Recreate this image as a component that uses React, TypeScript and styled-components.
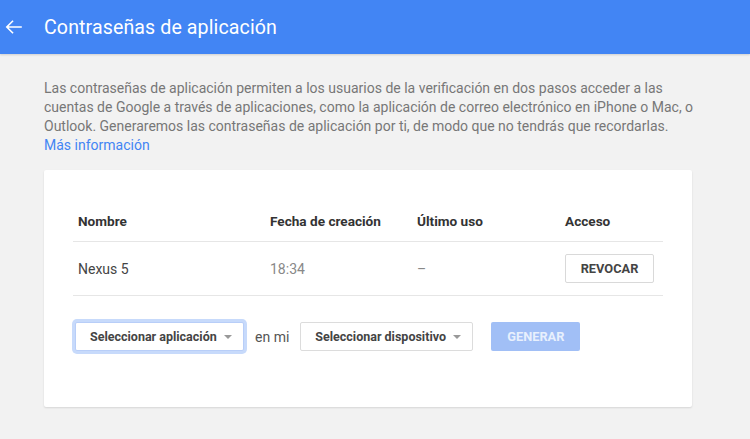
import React from "react";
import styled, { createGlobalStyle } from "styled-components";

const Global = createGlobalStyle`
  html, body { margin: 0; padding: 0; background: #f2f2f2; }
  body { font-family: Roboto, "Noto Sans", Arial, sans-serif; -webkit-font-smoothing: antialiased; }
  * { box-sizing: border-box; }
`;

const Page = styled.div`
  width: 750px;
  height: 439px;
  background: #f2f2f2;
  overflow: hidden;
`;

const Header = styled.header`
  height: 54px;
  background: #4285f4;
  display: flex;
  align-items: center;
  box-shadow: 0 1px 2px rgba(0, 0, 0, 0.15);
`;

const BackButton = styled.div`
  width: 44px;
  height: 54px;
  display: flex;
  align-items: center;
  padding-left: 5px;
`;

const Title = styled.h1`
  margin: 0;
  font-size: 19.6px;
  font-weight: 400;
  color: #fff;
  letter-spacing: 0.1px;
`;

const Content = styled.main`
  padding: 25px 30px 0 44px;
`;

const Intro = styled.p`
  margin: 0;
  width: 662px;
  font-size: 14px;
  line-height: 19px;
  color: #777;
`;

const Link = styled.a`
  color: #4285f4;
  text-decoration: none;
`;

const Card = styled.section`
  margin-top: 15px;
  width: 648px;
  background: #fff;
  border-radius: 2px;
  box-shadow: 0 1px 2px rgba(0, 0, 0, 0.12);
  padding: 30px 29px 56px 29px;
`;

const Table = styled.div`
  width: 590px;
`;

const Row = styled.div<{ $head?: boolean }>`
  display: grid;
  grid-template-columns: 192px 147px 148px 103px;
  align-items: center;
  height: ${(p) => (p.$head ? "42px" : "54px")};
  border-bottom: 1px solid #e6e6e6;
`;

const Cell = styled.div<{ $tone?: "head" | "main" | "muted" }>`
  padding-left: 5px;
  font-size: ${(p) => (p.$tone === "head" ? "13.6px" : "14px")};
  font-weight: ${(p) => (p.$tone === "head" ? 700 : 400)};
  color: ${(p) =>
    p.$tone === "head" ? "#333" : p.$tone === "muted" ? "#888" : "#444"};
`;

const RevokeButton = styled.button`
  width: 89px;
  height: 29px;
  background: #fff;
  border: 1px solid #d9d9d9;
  border-radius: 2px;
  font-family: inherit;
  font-size: 12.8px;
  font-weight: 700;
  color: #444;
  padding: 0;
`;

const Controls = styled.div`
  display: flex;
  align-items: center;
  margin-top: 26px;
  margin-left: 2px;
  height: 29px;
`;

const Select = styled.div<{ $focused?: boolean; $w: number }>`
  width: ${(p) => p.$w}px;
  height: 29px;
  border: 1px solid ${(p) => (p.$focused ? "#b8cef8" : "#dcdcdc")};
  border-radius: 2px;
  background: #fff;
  box-shadow: ${(p) => (p.$focused ? "0 0 0 3px #c7dafb" : "none")};
  display: flex;
  align-items: center;
  justify-content: space-between;
  padding: 0 11px 0 14px;
  font-size: 12.5px;
  font-weight: 700;
  color: #444;
`;

const Caret = styled.span`
  width: 0;
  height: 0;
  border-left: 4px solid transparent;
  border-right: 4px solid transparent;
  border-top: 4px solid #999;
`;

const Joiner = styled.span`
  font-size: 14px;
  color: #555;
  margin: 0 11px 0 11px;
`;

const GenerateButton = styled.button`
  width: 89px;
  height: 29px;
  margin-left: 18px;
  background: #a1bff6;
  border: none;
  border-radius: 2px;
  font-family: inherit;
  font-size: 12.8px;
  font-weight: 700;
  color: #e8f0fd;
  padding: 0;
`;

const BackArrow = () => (
  <svg width="17" height="14" viewBox="0 0 17 14" fill="none">
    <path
      d="M16 7H2M7.5 1.3L1.8 7l5.7 5.7"
      stroke="#fff"
      strokeWidth="1.6"
      strokeLinecap="square"
    />
  </svg>
);

export default function App() {
  return (
    <Page>
      <Global />
      <Header>
        <BackButton>
          <BackArrow />
        </BackButton>
        <Title>Contraseñas de aplicación</Title>
      </Header>
      <Content>
        <Intro>
          Las contraseñas de aplicación permiten a los usuarios de la verificación en dos pasos acceder a las
          cuentas de Google a través de aplicaciones, como la aplicación de correo electrónico en iPhone o Mac, o
          Outlook. Generaremos las contraseñas de aplicación por ti, de modo que no tendrás que recordarlas.
          <br />
          <Link href="#">Más información</Link>
        </Intro>
        <Card>
          <Table>
            <Row $head>
              <Cell $tone="head">Nombre</Cell>
              <Cell $tone="head">Fecha de creación</Cell>
              <Cell $tone="head">Último uso</Cell>
              <Cell $tone="head">Acceso</Cell>
            </Row>
            <Row>
              <Cell $tone="main">Nexus 5</Cell>
              <Cell $tone="muted">18:34</Cell>
              <Cell $tone="muted">–</Cell>
              <Cell>
                <RevokeButton>REVOCAR</RevokeButton>
              </Cell>
            </Row>
          </Table>
          <Controls>
            <Select $focused $w={169}>
              Seleccionar aplicación
              <Caret />
            </Select>
            <Joiner>en mi</Joiner>
            <Select $w={173}>
              Seleccionar dispositivo
              <Caret />
            </Select>
            <GenerateButton>GENERAR</GenerateButton>
          </Controls>
        </Card>
      </Content>
    </Page>
  );
}
